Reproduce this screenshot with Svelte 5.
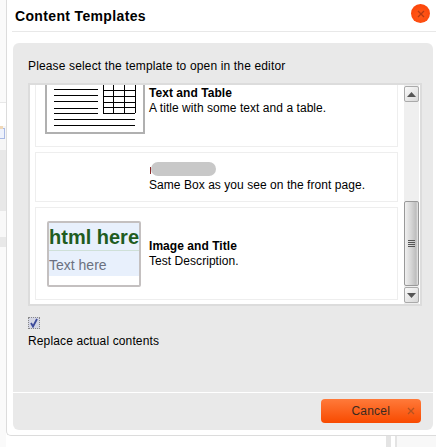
<script lang="ts">
    const gridRows = [24, 30, 36, 41, 47];
    const gridCols = [38, 48.5, 59, 70];
    const textLines = [10, 16, 23, 29, 35.5, 42, 47.5];
    const longLines = [53.5, 59.5];
</script>

<div class="page">
    <div class="backdrop">
        <div class="band b1"></div>
        <div class="band b2"></div>
        <div class="band b3"></div>
        <div class="band b4"></div>
        <div class="band b5"></div>
        <div class="band b6"></div>
    </div>
    <div class="page-icon"></div>
    <div class="stripe"></div>

    <div class="dialog">
        <div class="dialog-head">
            <h1>Content Templates</h1>
            <button class="close" aria-label="Close">
                <svg width="8" height="8" viewBox="0 0 8 8"><path d="M1 1l6 6M7 1l-6 6" stroke="#b53a14" stroke-width="1.3" /></svg>
            </button>
        </div>
        <div class="panel">
            <div class="panel-body">
                <p class="intro">Please select the template to open in the editor</p>
                <div class="list-box">
                    <div class="list">
                        <div class="item first">
                            <div class="thumb-table">
                                <svg width="96" height="62" viewBox="2 4 96 62">
                                    {#each textLines as y}
                                        <line x1="9" x2="53" y1={y} y2={y} stroke="#000" />
                                    {/each}
                                    {#each longLines as y}
                                        <line x1="9" x2="90" y1={y} y2={y} stroke="#000" />
                                    {/each}
                                    {#each gridRows as y}
                                        <line x1="58" x2="90" y1={y} y2={y} stroke="#000" />
                                    {/each}
                                    {#each gridCols as x}
                                        <line x1={x + 20} x2={x + 20} y1="10" y2="47" stroke="#000" />
                                    {/each}
                                </svg>
                            </div>
                            <div class="item-text">
                                <strong>Text and Table</strong>
                                <span>A title with some text and a table.</span>
                            </div>
                        </div>
                        <div class="item short">
                            <div class="thumb-empty"></div>
                            <div class="item-text">
                                <div class="blurred"></div>
                                <span>Same Box as you see on the front page.</span>
                            </div>
                        </div>
                        <div class="item">
                            <div class="thumb-html">
                                <div class="html-top">html here</div>
                                <div class="html-bottom">Text here</div>
                            </div>
                            <div class="item-text">
                                <strong>Image and Title</strong>
                                <span>Test Description.</span>
                            </div>
                        </div>
                    </div>
                    <div class="scrollbar">
                        <div class="sb-btn">
                            <svg width="9" height="5" viewBox="0 0 9 5"><path d="M4.5 0L9 5H0z" fill="#555" /></svg>
                        </div>
                        <div class="sb-track"></div>
                        <div class="sb-thumb">
                            <i></i><i></i><i></i><i></i>
                        </div>
                        <div class="sb-btn down">
                            <svg width="9" height="5" viewBox="0 0 9 5"><path d="M0 0h9L4.5 5z" fill="#555" /></svg>
                        </div>
                    </div>
                </div>
                <div class="replace">
                    <span class="check">
                        <svg width="10" height="10" viewBox="0 0 10 10"><path d="M2 5l2 3.5L8 1" fill="none" stroke="#3c4a9a" stroke-width="1.8" /></svg>
                    </span>
                    <span class="replace-label">Replace actual contents</span>
                </div>
            </div>
            <div class="panel-foot">
                <button class="cancel">
                    <span>Cancel</span>
                    <svg width="8" height="8" viewBox="0 0 8 8"><path d="M1 1l6 6M7 1l-6 6" stroke="#b5531f" stroke-width="1.3" /></svg>
                </button>
            </div>
        </div>
    </div>
</div>

<style>
    :global(body) {
        margin: 0;
        background: #fff;
        font-family: "Liberation Sans", Arial, sans-serif;
    }

    .page {
        position: relative;
        width: 436px;
        height: 447px;
        overflow: hidden;
        background: #fff;
    }

    /* page behind the dialog */
    .backdrop {
        position: absolute;
        left: 0;
        top: 0;
        width: 6px;
        height: 447px;
        display: flex;
        flex-direction: column;
        background: #fafafa;
    }

    .band { flex: none; }
    .b1 { height: 102px; background: #fafafa; border-bottom: 1px solid #e8e8e8; }
    .b2 { height: 23px; background: #fff; }
    .b3 { height: 24px; background: #f6f6f6; }
    .b4 { height: 61px; background: #e8e8e8; }
    .b5 { height: 26px; background: #f8f8f8; }
    .b6 { height: 10px; background: #e8e8e8; }

    .page-icon {
        position: absolute;
        left: 0;
        top: 128px;
        width: 4px;
        height: 9px;
        border: 1px solid #a9b9e4;
        border-left: none;
        background: #eef2fc;
    }

    .page-icon::before {
        content: "";
        position: absolute;
        left: 0;
        top: -3px;
        width: 3px;
        height: 3px;
        background: #f0d8b8;
    }

    .stripe {
        position: absolute;
        left: 386px;
        top: 436px;
        width: 50px;
        height: 11px;
        background: linear-gradient(to right, #e4e4e4 0 5px, #fff 5px 9px, #e4e4e4 9px 11px, #f8f8f8 11px);
    }

    .dialog {
        position: absolute;
        left: 6px;
        top: 0;
        width: 430px;
        height: 436px;
        box-sizing: border-box;
        padding: 0 3px 5px 6px;
        background: #fff;
        border-left: 1px solid #dcdcdc;
        border-bottom: 1px solid #dcdcdc;
        border-radius: 0 0 0 5px;
        display: flex;
        flex-direction: column;
    }

    .dialog-head {
        height: 31px;
        flex: none;
        display: flex;
        align-items: center;
        justify-content: space-between;
        border-bottom: 1px solid #e8e8e8;
        margin-left: -1px;
        margin-right: -3px;
        padding-left: 3px;
        padding-right: 6px;
        margin-bottom: 11px;
    }

    h1 {
        margin: 0;
        font-size: 14px;
        font-weight: bold;
        color: #000;
        letter-spacing: 0.35px;
    }

    .close {
        width: 19px;
        height: 19px;
        padding: 0;
        border: none;
        border-radius: 50%;
        background: radial-gradient(circle at 50% 60%, #ff5a1a, #fb3f05);
        display: flex;
        align-items: center;
        justify-content: center;
        position: relative;
        top: -2px;
    }

    .panel {
        flex: 1;
        display: flex;
        flex-direction: column;
        background: #e9e9e9;
        border-radius: 6px;
    }

    .panel-body {
        height: 350px;
        flex: none;
        box-sizing: border-box;
        padding: 16px 11px 0 15px;
        border-bottom: 1px solid #fff;
    }

    .intro {
        margin: 0 0 10px;
        font-size: 12px;
        line-height: 14px;
        color: #000;
        letter-spacing: 0.15px;
    }

    .list-box {
        display: flex;
        width: 394px;
        height: 223px;
        box-sizing: border-box;
        border: 2px solid #dcdcdc;
        background: #fff;
    }

    .list {
        width: 374px;
        height: 219px;
        overflow: hidden;
        box-sizing: border-box;
        padding-left: 5px;
    }

    .item {
        width: 363px;
        height: 93px;
        box-sizing: border-box;
        border: 1px solid #eeeeee;
        display: flex;
        align-items: center;
        margin-bottom: 5px;
        padding-left: 9px;
    }

    .first { margin-top: -31px; }
    .short { height: 50px; }

    .item-text {
        display: flex;
        flex-direction: column;
        font-size: 12px;
        line-height: 15px;
        color: #000;
        white-space: nowrap;
        letter-spacing: 0.05px;
    }

    .thumb-table {
        width: 96px;
        height: 62px;
        flex: none;
        border: 2px solid #b0b0b0;
        margin-right: 4px;
    }

    .thumb-table svg { display: block; }
    .thumb-table line { shape-rendering: crispEdges; }

    .thumb-empty {
        width: 100px;
        flex: none;
        margin-right: 4px;
    }

    .blurred {
        position: relative;
        width: 65px;
        height: 14px;
        margin-left: 2px;
        margin-bottom: 2px;
        border-radius: 7px;
        background: #c8c8c8;
    }

    .blurred::before {
        content: "";
        position: absolute;
        left: -1px;
        top: 5px;
        width: 1px;
        height: 7px;
        background: #8a2a2a;
    }

    .thumb-html {
        width: 90px;
        height: 62px;
        flex: none;
        border: 2px solid #c4c0c0;
        border-radius: 2px;
        margin: 0 8px 0 2px;
        overflow: hidden;
        background: #fff;
    }

    .html-top {
        height: 27px;
        line-height: 29px;
        font-size: 20px;
        font-weight: bold;
        color: #1f5c1f;
        background: #e8f0fc;
        border-bottom: 1px solid #cfe0d8;
        white-space: nowrap;
    }

    .html-bottom {
        height: 25px;
        line-height: 28px;
        font-size: 14px;
        color: #6b7080;
        background: #e8f0fc;
    }

    .scrollbar {
        position: relative;
        width: 15px;
        height: 219px;
        display: flex;
        flex-direction: column;
        background: #efefef;
    }

    .sb-btn {
        width: 15px;
        height: 16px;
        flex: none;
        margin-top: 1px;
        box-sizing: border-box;
        border: 1px solid #aaa;
        border-radius: 2px;
        background: linear-gradient(135deg, #fafafa, #d8d8d8);
        display: flex;
        align-items: center;
        justify-content: center;
    }

    .sb-track { height: 99px; flex: none; }

    .sb-thumb {
        height: 85px;
        flex: none;
        box-sizing: border-box;
        border: 1px solid #999;
        border-radius: 2px;
        background: linear-gradient(to right, #f0f0f0, #d4d4d4 50%, #bdbdbd 85%, #e8e8e8);
        display: flex;
        flex-direction: column;
        align-items: center;
        justify-content: center;
        gap: 1px;
    }

    .sb-thumb i {
        display: block;
        width: 7px;
        height: 1px;
        background: #555;
    }

    .replace {
        margin-top: 11px;
        display: flex;
        flex-direction: column;
        gap: 5px;
    }

    .check {
        width: 12px;
        height: 12px;
        box-sizing: border-box;
        background: #d4d6e4;
        border: 1px dotted #888;
        display: flex;
        align-items: center;
        justify-content: center;
    }

    .replace-label {
        font-size: 12px;
        line-height: 14px;
        color: #000;
        letter-spacing: 0.13px;
    }

    .panel-foot {
        flex: 1;
        display: flex;
        align-items: center;
        justify-content: flex-end;
        padding: 0 12px 2px 0;
    }

    .cancel {
        width: 100px;
        height: 24px;
        padding: 0 6px 0 0;
        border: none;
        border-radius: 4px;
        background: linear-gradient(to bottom, #ff7a3a, #f84a00);
        display: flex;
        align-items: center;
        justify-content: flex-end;
        gap: 17px;
        font-family: inherit;
        font-size: 12px;
        letter-spacing: 0.2px;
        color: #3a2a20;
    }
</style>
